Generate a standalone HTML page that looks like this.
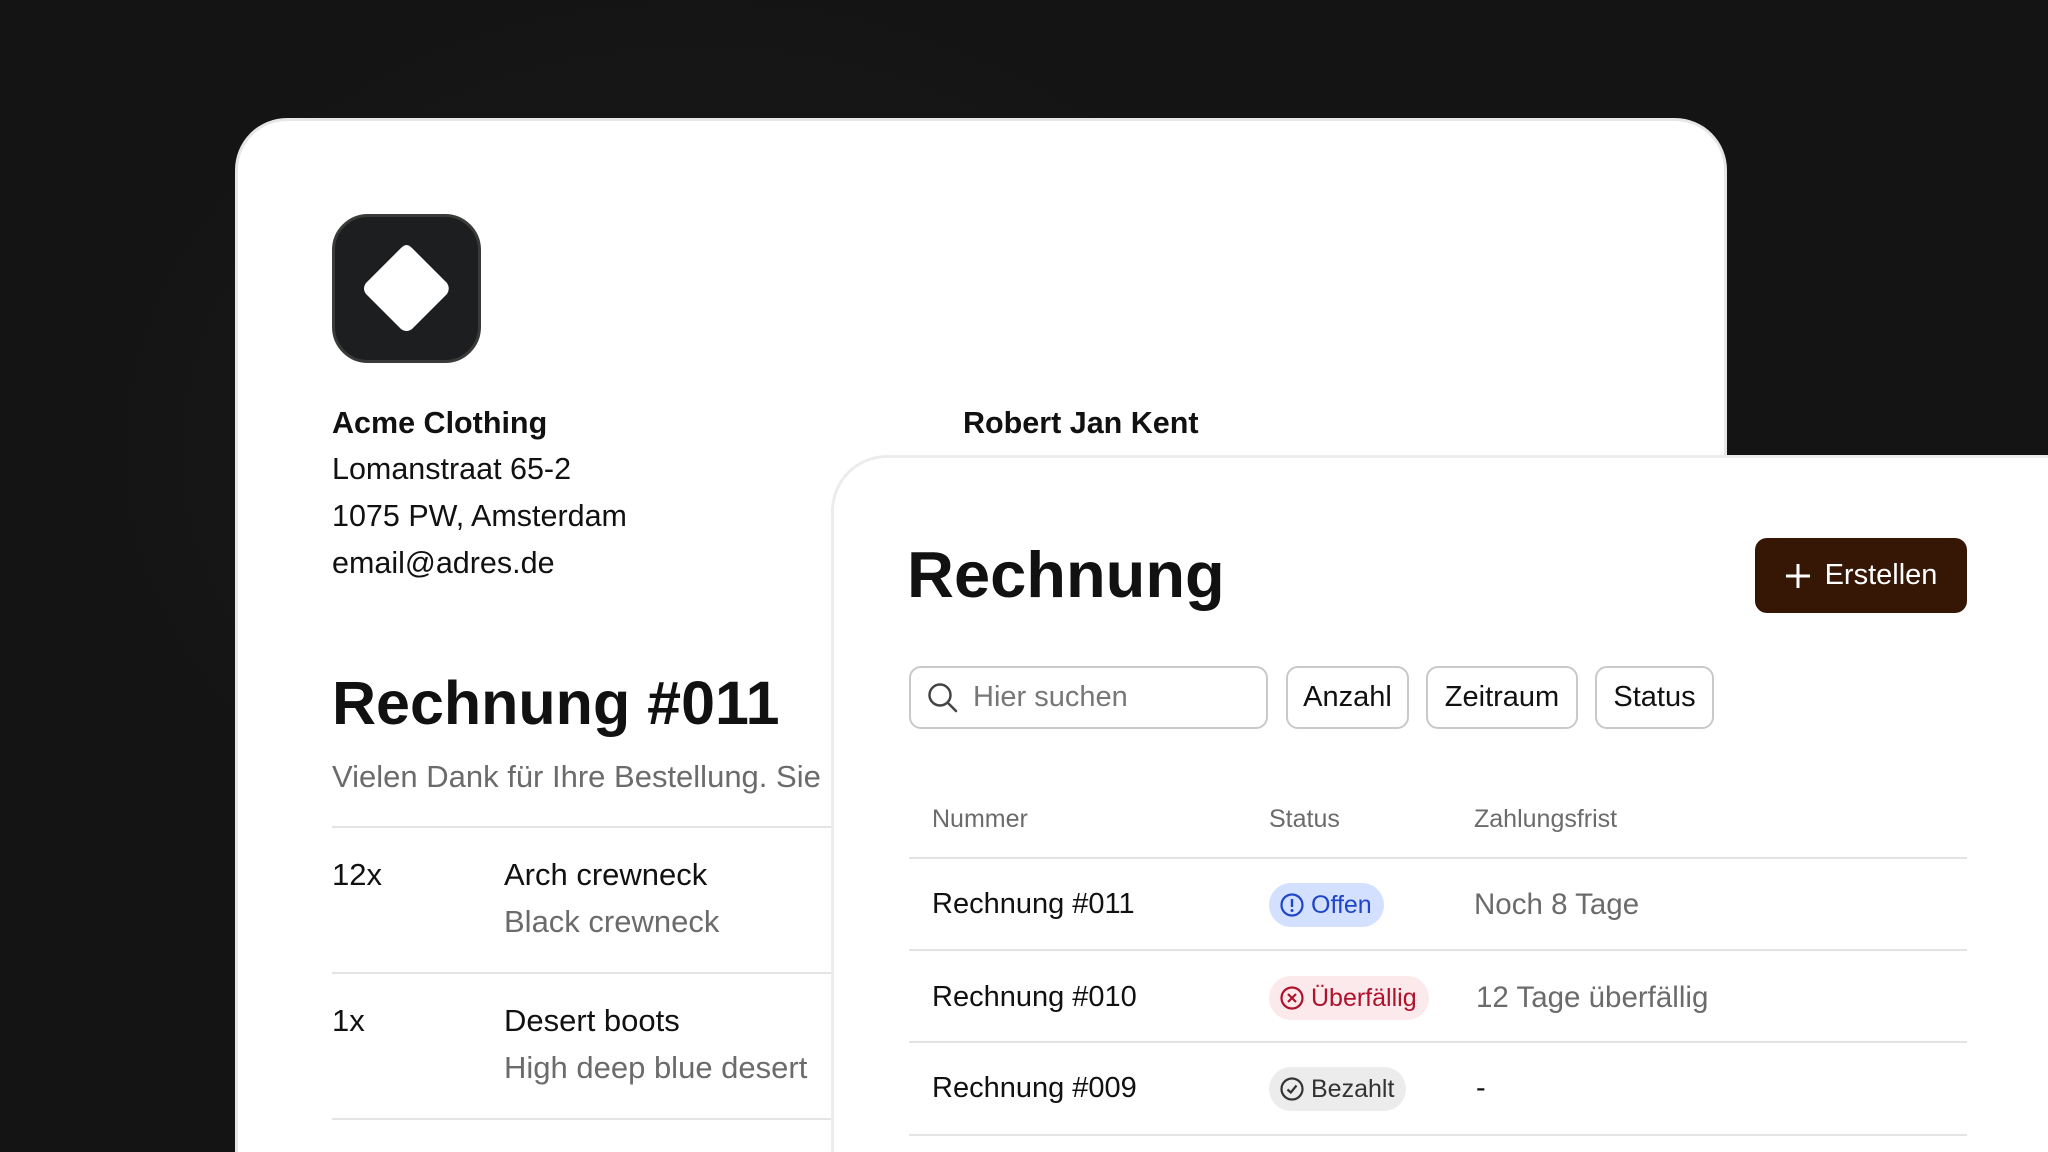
<!DOCTYPE html>
<html><head><meta charset="utf-8"><style>
*{margin:0;padding:0;box-sizing:border-box}
html,body{width:2048px;height:1152px;overflow:hidden}
body{background:radial-gradient(ellipse 900px 700px at 700px 450px,#1c1c1c,#141414 70%);font-family:"Liberation Sans",sans-serif;color:#111}
#wrap{position:absolute;left:0;top:0;width:2048px;height:1152px;overflow:hidden}
.a{position:absolute;white-space:nowrap}
#back{position:absolute;left:235px;top:118px;width:1492px;height:1034px;background:#fff;border-radius:52px 52px 0 0;border:3px solid #e6e6e6;border-bottom:none}
#front{position:absolute;left:831px;top:455px;width:1217px;height:697px;background:#fff;border-radius:56px 0 0 0;border:3px solid #ececec;border-right:none;border-bottom:none}
.t30{font-size:30.5px}
.t31{font-size:31px}
.g{color:#6b6b6b}
.hr{position:absolute;height:2px;background:#e4e4e4}
.btn{position:absolute;top:666px;height:63px;border:2px solid #c9c9c9;border-radius:12px;font-size:29px;display:flex;align-items:center;justify-content:center;color:#111}
.badge{position:absolute;height:44px;border-radius:22px;font-size:25px;display:flex;align-items:center;padding:0 12px 0 10px;gap:6px}
</style></head><body><div id="wrap">
<div id="back"></div>
<div class="a" style="left:332px;top:214px;width:149px;height:149px;background:#1d1e20;border:3px solid #3a3b38;border-radius:36px">
<svg width="143" height="143" viewBox="0 0 143 143" style="position:absolute;left:0;top:0"><path d="M71.5 28 Q74 28 77 31 L112 66 Q115.5 71.5 112 77 L77 112 Q71.5 116 66 112 L31 77 Q27 71.5 31 66 L66 31 Q69 28 71.5 28Z" fill="#fff"/></svg></div>
<div class="a t30" style="left:332px;top:406px;font-weight:bold">Acme Clothing</div>
<div class="a t30" style="left:332px;top:452px">Lomanstraat 65-2</div>
<div class="a t30" style="left:332px;top:499px">1075 PW, Amsterdam</div>
<div class="a t30" style="left:332px;top:546px">email@adres.de</div>
<div class="a t30" style="left:963px;top:406px;font-weight:bold">Robert Jan Kent</div>
<div class="a" style="left:332px;top:668px;font-size:61px;font-weight:bold">Rechnung #011</div>
<div class="a t31 g" style="left:332px;top:759px">Vielen Dank für Ihre Bestellung. Sie</div>
<div class="hr" style="left:332px;top:826px;width:500px"></div>
<div class="a t31" style="left:332px;top:857px">12x</div>
<div class="a t31" style="left:504px;top:857px">Arch crewneck</div>
<div class="a t31 g" style="left:504px;top:904px">Black crewneck</div>
<div class="hr" style="left:332px;top:972px;width:500px"></div>
<div class="a t31" style="left:332px;top:1003px">1x</div>
<div class="a t31" style="left:504px;top:1003px">Desert boots</div>
<div class="a t31 g" style="left:504px;top:1050px">High deep blue desert</div>
<div class="hr" style="left:332px;top:1118px;width:500px"></div>

<div id="front"></div>
<div class="a" style="left:907px;top:537px;font-size:65px;font-weight:bold">Rechnung</div>
<div class="a" style="left:1755px;top:538px;width:212px;height:75px;background:#361604;border-radius:12px;color:#fff;font-size:29px;display:flex;align-items:center;justify-content:center;gap:14px"><svg width="26" height="26" viewBox="0 0 26 26"><path d="M13 1V25M1 13H25" stroke="#fff" stroke-width="3"/></svg>Erstellen</div>
<div class="btn" style="left:909px;width:359px;justify-content:flex-start;padding-left:16px;color:#777"><svg width="32" height="32" viewBox="0 0 32 32" style="margin-right:14px"><circle cx="13" cy="13" r="10.5" fill="none" stroke="#444" stroke-width="2.5"/><path d="M21 21L29 29" stroke="#444" stroke-width="2.5" stroke-linecap="round"/></svg>Hier suchen</div>
<div class="btn" style="left:1286px;width:123px">Anzahl</div>
<div class="btn" style="left:1426px;width:152px">Zeitraum</div>
<div class="btn" style="left:1595px;width:119px">Status</div>
<div class="a g" style="left:932px;top:805px;font-size:25px">Nummer</div>
<div class="a g" style="left:1269px;top:805px;font-size:25px">Status</div>
<div class="a g" style="left:1474px;top:805px;font-size:25px">Zahlungsfrist</div>
<div class="hr" style="left:909px;top:857px;width:1058px"></div>
<div class="a" style="left:932px;top:888px;font-size:29px">Rechnung #011</div>
<div class="badge" style="left:1269px;top:883px;background:#d3e0ff;color:#1f45c8"><svg width="26" height="26" viewBox="0 0 26 26"><circle cx="13" cy="13" r="10.5" fill="none" stroke="#1f45c8" stroke-width="2.2"/><path d="M13 7V15" stroke="#1f45c8" stroke-width="2.4"/><circle cx="13" cy="18.5" r="1.5" fill="#1f45c8"/></svg>Offen</div>
<div class="a g" style="left:1474px;top:888px;font-size:29.5px">Noch 8 Tage</div>
<div class="hr" style="left:909px;top:949px;width:1058px"></div>
<div class="a" style="left:932px;top:981px;font-size:29px">Rechnung #010</div>
<div class="badge" style="left:1269px;top:976px;background:#fbe9ec;color:#b0122b"><svg width="26" height="26" viewBox="0 0 26 26"><circle cx="13" cy="13" r="10.5" fill="none" stroke="#b0122b" stroke-width="2.2"/><path d="M9 9L17 17M17 9L9 17" stroke="#b0122b" stroke-width="2.2"/></svg>Überfällig</div>
<div class="a g" style="left:1476px;top:981px;font-size:29.5px">12 Tage überfällig</div>
<div class="hr" style="left:909px;top:1041px;width:1058px"></div>
<div class="a" style="left:932px;top:1072px;font-size:29px">Rechnung #009</div>
<div class="badge" style="left:1269px;top:1067px;background:#ececec;color:#333"><svg width="26" height="26" viewBox="0 0 26 26"><circle cx="13" cy="13" r="10.5" fill="none" stroke="#333" stroke-width="2.2"/><path d="M8.5 13.5L11.8 16.5L17.5 9.5" fill="none" stroke="#333" stroke-width="2.2"/></svg>Bezahlt</div>
<div class="a" style="left:1476px;top:1072px;font-size:29px">-</div>
<div class="hr" style="left:909px;top:1134px;width:1058px"></div>
</div></body></html>
